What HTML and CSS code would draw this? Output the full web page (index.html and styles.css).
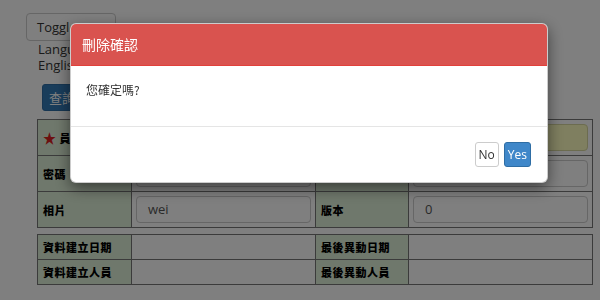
FILE: index.html
```html
<!DOCTYPE html>
<html>
<head>
<meta charset="utf-8">
<link rel="stylesheet" href="styles.css">
</head>
<body>
<div class="page">
  <button class="btn-toggle">Toggle</button>
  <div class="lang">
    <div>Language</div>
    <div>English</div>
  </div>
  <button class="btn-query">查詢</button>
  <table class="grid form">
    <colgroup><col class="c-label"><col class="c-value"><col class="c-label2"><col class="c-value"></colgroup>
    <tr>
      <th><span class="star">★</span> 員工編號</th>
      <td><div class="field"></div></td>
      <th>員工姓名</th>
      <td><div class="field yellow"></div></td>
    </tr>
    <tr>
      <th>密碼</th>
      <td><div class="field"></div></td>
      <th>確認密碼</th>
      <td><div class="field"></div></td>
    </tr>
    <tr>
      <th>相片</th>
      <td><div class="field">wei</div></td>
      <th>版本</th>
      <td><div class="field">0</div></td>
    </tr>
  </table>
  <table class="grid meta">
    <colgroup><col class="c-label"><col class="c-value"><col class="c-label2"><col class="c-value"></colgroup>
    <tr>
      <th>資料建立日期</th>
      <td></td>
      <th>最後異動日期</th>
      <td></td>
    </tr>
    <tr>
      <th>資料建立人員</th>
      <td></td>
      <th>最後異動人員</th>
      <td></td>
    </tr>
  </table>
</div>
<div class="backdrop"></div>
<div class="modal">
  <div class="modal-header">刪除確認</div>
  <div class="modal-body"><p>您確定嗎?</p></div>
  <div class="modal-footer">
    <button class="btn btn-no">No</button>
    <button class="btn btn-yes">Yes</button>
  </div>
</div>
</body>
</html>
```
FILE: styles.css
```css
html, body {
  margin: 0;
  padding: 0;
  background: #ffffff;
  font-family: "Open Sans", "Noto Sans CJK TC", sans-serif;
  font-size: 13px;
  color: #333;
}
.page {
  padding: 13px 0 0 26px;
}
.btn-toggle {
  display: block;
  width: 90px;
  height: 28px;
  padding: 0 10px;
  border: 1px solid #ccc;
  border-radius: 4px;
  background: #fff;
  font-family: "Open Sans", sans-serif;
  font-size: 13px;
  color: #333;
  text-align: left;
  white-space: nowrap;
}
.lang {
  margin-left: 12px;
  line-height: 16px;
  font-size: 13px;
  color: #333;
}
.btn-query {
  display: block;
  margin: 11px 0 0 16px;
  height: 27px;
  padding: 0 6px;
  border: 1px solid #2e6da4;
  border-radius: 3px;
  background: #337ab7;
  color: #fff;
  font-family: "Noto Sans CJK TC", sans-serif;
  font-size: 13px;
}
.grid {
  border-collapse: collapse;
  table-layout: fixed;
  width: 556px;
  margin-left: 11px;
}
.form { margin-top: 8px; }
.meta { margin-top: 6px; }
.c-label { width: 94px; }
.c-label2 { width: 93px; }
.c-value { width: 184px; }
.grid th, .grid td {
  border: 1px solid #777;
  padding: 0 4px;
}
.grid th {
  background: #dff0d8;
  text-align: left;
  padding-left: 5px;
  font-family: "Noto Sans CJK TC", sans-serif;
  font-size: 11px;
  letter-spacing: 0.5px;
  font-weight: 900;
  color: #000;
}
.form tr { height: 36px; }
.meta tr { height: 25px; }
.star {
  color: #d9211e;
  font-size: 13px;
}
.field {
  height: 27px;
  box-sizing: border-box;
  border: 1px solid #ccc;
  border-radius: 4px;
  background: #fff;
  padding: 0 11px;
  line-height: 25px;
  font-size: 13px;
  color: #555;
}
.field.yellow {
  background: #fefec0;
  border-color: #d8d8a0;
}
.backdrop {
  position: fixed;
  inset: 0;
  background: rgba(0, 0, 0, 0.5);
}
.modal {
  position: fixed;
  left: 70px;
  top: 23px;
  width: 478px;
  box-sizing: border-box;
  background: #fff;
  border: 1px solid rgba(0, 0, 0, 0.2);
  border-radius: 6px;
  box-shadow: 0 5px 15px rgba(0, 0, 0, 0.5);
  overflow: hidden;
}
.modal-header {
  height: 41px;
  background: #d9534f;
  border-bottom: 1px solid #e2403b;
  padding-left: 11px;
  line-height: 41px;
  color: #fff;
  font-family: "Noto Sans CJK TC", sans-serif;
  font-size: 14px;
}
.modal-body {
  height: 60px;
  box-sizing: border-box;
  padding: 15px 15px 0;
}
.modal-body p {
  margin: 0;
  line-height: 18px;
  font-family: "Noto Sans CJK TC", sans-serif;
  font-size: 12px;
  color: #333;
}
.modal-footer {
  border-top: 1px solid #e5e5e5;
  padding: 15px 16px 15px 0;
  display: flex;
  justify-content: flex-end;
  gap: 5px;
}
.btn {
  height: 25px;
  padding: 0 3px;
  border-radius: 3px;
  font-family: "Open Sans", sans-serif;
  font-size: 12px;
  line-height: 23px;
}
.btn-no {
  background: #fff;
  border: 1px solid #ccc;
  color: #333;
}
.btn-yes {
  background: #3f87c9;
  border: 1px solid #2e6da4;
  color: #fff;
}
```
